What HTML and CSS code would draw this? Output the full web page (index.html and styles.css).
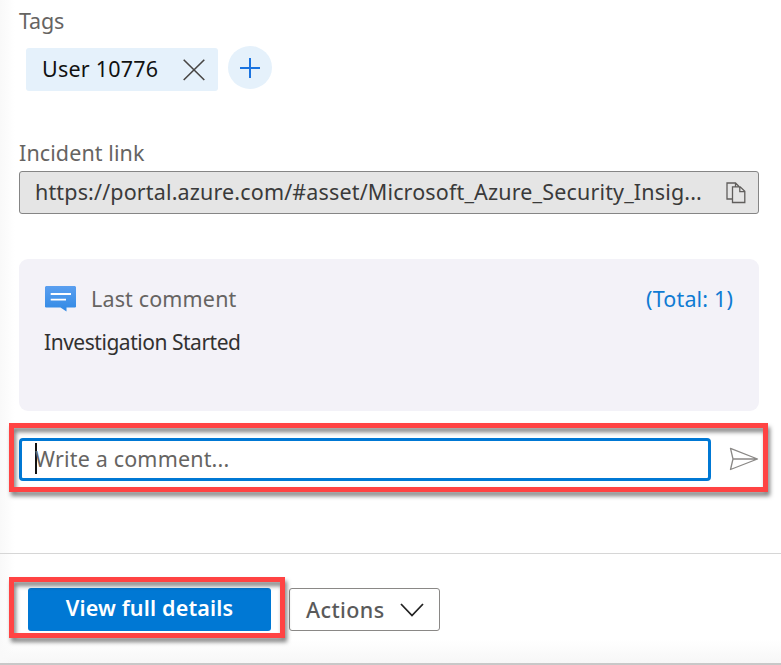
FILE: index.html
```html
<!DOCTYPE html>
<html lang="en">
<head>
<meta charset="utf-8">
<title>Incident details</title>
<link rel="stylesheet" href="styles.css">
</head>
<body>
<main class="panel">
  <section class="details">
    <h2 class="label label-tags">Tags</h2>
    <div class="tags">
      <div class="tag">
        <span class="tag-name">User 10776</span>
        <svg class="close" width="22" height="22" viewBox="0 0 22 22"><path d="M.7.7l20.6 20.3M21.3.7L.7 21"/></svg>
      </div>
      <button class="add" aria-label="Add tag"><svg width="22" height="22" viewBox="0 0 22 22"><path d="M11 1v20M1 11h20"/></svg></button>
    </div>
    <h2 class="label label-link">Incident link</h2>
    <div class="link-box">
      <span class="url">https://portal.azure.com/#asset/Microsoft_Azure_Security_Insig...</span>
      <svg class="copy" width="20" height="22" viewBox="0 0 20 22"><path d="M6 17H1V1h8.500l3.500 3.500M9.500 1v3.500M6.500 4.800h7.700l4.600 4.500v11.200H6.500zM13.800 5v4.700h5"/></svg>
    </div>
    <section class="card">
      <div class="card-head">
        <svg class="bubble" width="31" height="26" viewBox="0 0 31 26">
          <defs><linearGradient id="blue" x1="0" y1="0" x2="0" y2="1"><stop offset="0" stop-color="#5a9ff0"/><stop offset="1" stop-color="#3089e4"/></linearGradient></defs>
          <path fill="url(#blue)" d="M1 0h29l1 1v20l-1 .5h-8.500V25.500L15.500 21.500H1l-1-.5V1z"/>
          <path stroke="#fff" stroke-width="1.800" d="M5.700 8H26M5.700 13.700H21"/>
        </svg>
        <span>Last comment</span>
        <a class="total">(Total: 1)</a>
      </div>
      <p class="comment">Investigation Started</p>
    </section>
    <div class="compose">
      <div class="input"><span class="caret"></span><span class="placeholder">Write a comment...</span></div>
      <svg class="send" width="30" height="24" viewBox="0 0 30 24"><path d="M1.500 1.300L28.500 12 1.500 22.500 4 12zM4 12h24"/></svg>
      <div class="highlight"></div>
    </div>
  </section>
  <footer class="footer">
    <div class="primary-wrap">
      <button class="primary">View full details</button>
      <div class="highlight"></div>
    </div>
    <button class="actions"><span>Actions</span><svg width="24" height="14" viewBox="0 0 24 14"><path d="M1 1l11 11.500L23 1"/></svg></button>
  </footer>
</main>
</body>
</html>
```
FILE: styles.css
```css
* { box-sizing: border-box; }
body {
  margin: 0;
  background: #fff;
  font: 21.500px/30px "Noto Sans", "Open Sans", sans-serif;
  font-weight: 370;
  color: #111;
}
h2, p { margin: 0; font: inherit; }
button { font: inherit; padding: 0; border: 0; }
svg { display: block; flex: none; fill: none; }
span { white-space: nowrap; }
.panel {
  height: 665px;
  overflow: hidden;
  border-bottom: 2px solid #c8c8c8;
  background:
    linear-gradient(90deg, #f9f9f9, rgba(255,255,255,0) 15px),
    linear-gradient(0deg, #f7f7f7, #fff 24px);
}
.details { height: 553px; padding: 6px 22px 0 19px; }
.label { height: 30px; color: #666462; }
.label-tags { letter-spacing: -.2px; }
.tags { display: flex; align-items: flex-start; gap: 10px; height: 45px; margin: 10px 0 0 7px; }
.tag {
  display: flex; align-items: center; justify-content: space-between;
  width: 192px; height: 43px; margin-top: 2px; padding: 0 13px 0 16px;
  background: #e5f1fb; border-radius: 3px;
}
.tag-name { padding-bottom: 2px; letter-spacing: .22px; }
.close { stroke: #484644; stroke-width: 1.600; }
.add {
  display: flex; align-items: center; justify-content: center;
  width: 44px; height: 43px; border-radius: 50%; background: #e5f1fb;
}
.add svg { stroke: #1a73e0; stroke-width: 2; }
.label-link { margin-top: 47px; letter-spacing: .1px; }
.link-box {
  display: flex; align-items: center; justify-content: space-between;
  height: 43px; margin-top: 3px; padding: 0 12px 0 15px;
  border: 1px solid #858585; border-radius: 3px; background: #e5e5e5; color: #3a3a3a;
}
.url { padding-bottom: 2px; letter-spacing: .15px; }
.copy { stroke: #605e5c; stroke-width: 1.300; }
.card {
  height: 152px; margin-top: 45px; padding: 25px 26px 0 26px;
  border-radius: 9px; background: #f3f2f8;
}
.card-head { display: flex; align-items: center; height: 30px; color: #666462; letter-spacing: .15px; }
.bubble { margin-right: 15px; }
.total { margin-left: auto; color: #0f7bd3; }
.comment { margin: 13px 0 0 -1px; color: #323130; font-size: 21px; letter-spacing: -.47px; }
.compose { position: relative; display: flex; align-items: center; justify-content: space-between; height: 43px; margin-top: 27px; }
.input {
  display: flex; align-items: center; width: 692px; height: 43px; padding-left: 13px;
  border: 3px solid #0078d4; border-radius: 4px; background: #fff; color: #666462;
}
.placeholder { padding-bottom: 2px; letter-spacing: .17px; }
.caret { width: 2px; height: 31px; margin: 0 -2px 2px 0; background: #111; }
.send { stroke: #8a8886; stroke-width: 1.300; stroke-linejoin: round; margin-bottom: 1px; }
.highlight { position: absolute; border: 5px solid #ff4343; filter: drop-shadow(2px 4px 2px rgba(0,0,0,.5)); }
.compose .highlight { inset: -15px -9px -11px -10px; }
.footer { display: flex; gap: 18px; height: 110px; padding: 34px 0 0 28px; border-top: 1px solid #d6d6d6; }
.primary-wrap { position: relative; width: 243px; height: 43px; }
.primary {
  display: block; width: 243px; height: 43px; padding-bottom: 4px;
  border-radius: 3px; background: #0078d4; color: #fff; font-weight: 600; letter-spacing: .17px;
}
.primary-wrap .highlight { inset: -11px -14px -7px -19px; }
.actions {
  display: flex; align-items: center; justify-content: space-between;
  width: 151px; height: 43px; padding: 0 15px 0 16px;
  border: 1px solid #8a8886; border-radius: 3px; background: #fff; color: #5a5a5a; font-weight: 500; letter-spacing: .4px;
}
.actions svg { stroke: #222; stroke-width: 1.800; }
```
